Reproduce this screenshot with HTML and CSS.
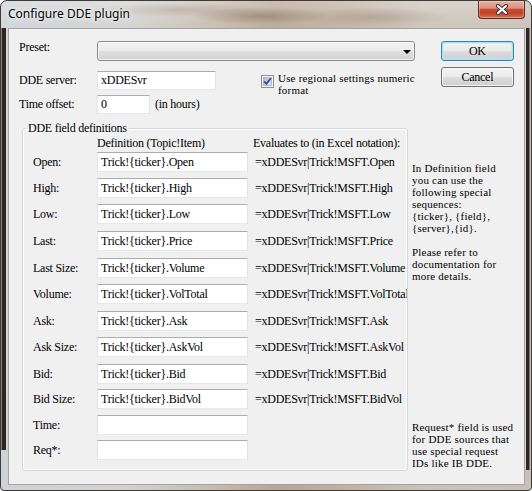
FILE: index.html
```html
<!DOCTYPE html>
<html>
<head>
<meta charset="utf-8">
<title>Configure DDE plugin</title>
<link rel="stylesheet" href="styles.css">
</head>
<body>
<div class="window">
  <div class="titlebar">
    <span class="title">Configure DDE plugin</span>
    <div class="close-btn">
      <svg width="12" height="11" viewBox="0 0 12 11">
        <path d="M2 2 L10 9 M10 2 L2 9" stroke="#3a3a3a" stroke-width="4.2" stroke-linecap="round" fill="none"/>
        <path d="M2 2 L10 9 M10 2 L2 9" stroke="#ffffff" stroke-width="2.2" stroke-linecap="round" fill="none"/>
      </svg>
    </div>
  </div>
  <div class="frame">
    <div class="client">
      <div class="top">
        <div class="form">
          <div class="row row-preset">
            <span class="lbl lbl-preset">Preset:</span>
            <div class="combo"><span class="combo-arrow"></span></div>
          </div>
          <div class="row row-server">
            <span class="lbl lbl-server">DDE server:</span>
            <div class="edit edit-server">xDDESvr</div>
            <div class="check">
              <svg class="checkbox" width="13" height="13" viewBox="0 0 13 13">
                <defs>
                  <linearGradient id="cbg" x1="0" y1="0" x2="1" y2="1">
                    <stop offset="0" stop-color="#aeb7c6"/>
                    <stop offset="1" stop-color="#eef1f5"/>
                  </linearGradient>
                </defs>
                <rect x="0.5" y="0.5" width="12" height="12" fill="#f6f6f6" stroke="#8e8f8f"/>
                <rect x="2.5" y="2.5" width="8" height="8" fill="url(#cbg)" stroke="#b4bccb"/>
                <path d="M3.2 6.4 L5.4 8.8 L9.8 3.2" stroke="#2b4aa0" stroke-width="1.8" fill="none"/>
              </svg>
              <span class="check-text">Use regional settings numeric<br>format</span>
            </div>
          </div>
          <div class="row row-offset">
            <span class="lbl lbl-offset">Time offset:</span>
            <div class="edit edit-offset">0</div>
            <span class="unit">(in hours)</span>
          </div>
        </div>
        <div class="buttons">
          <div class="btn btn-default">OK</div>
          <div class="btn">Cancel</div>
        </div>
      </div>
      <div class="bottom">
        <fieldset class="group">
          <legend class="group-title">DDE field definitions</legend>
          <div class="fields">
            <span></span>
            <span class="col-head">Definition (Topic!Item)</span>
            <span class="col-head eval-head">Evaluates to (in Excel notation):</span>

            <span class="flbl">Open:</span>
            <div class="edit fedit">Trick!{ticker}.Open</div>
            <span class="eval">=xDDESvr|Trick!MSFT.Open</span>

            <span class="flbl">High:</span>
            <div class="edit fedit">Trick!{ticker}.High</div>
            <span class="eval">=xDDESvr|Trick!MSFT.High</span>

            <span class="flbl">Low:</span>
            <div class="edit fedit">Trick!{ticker}.Low</div>
            <span class="eval">=xDDESvr|Trick!MSFT.Low</span>

            <span class="flbl">Last:</span>
            <div class="edit fedit">Trick!{ticker}.Price</div>
            <span class="eval">=xDDESvr|Trick!MSFT.Price</span>

            <span class="flbl">Last Size:</span>
            <div class="edit fedit">Trick!{ticker}.Volume</div>
            <span class="eval">=xDDESvr|Trick!MSFT.Volume</span>

            <span class="flbl">Volume:</span>
            <div class="edit fedit">Trick!{ticker}.VolTotal</div>
            <span class="eval">=xDDESvr|Trick!MSFT.VolTotal</span>

            <span class="flbl">Ask:</span>
            <div class="edit fedit">Trick!{ticker}.Ask</div>
            <span class="eval">=xDDESvr|Trick!MSFT.Ask</span>

            <span class="flbl">Ask Size:</span>
            <div class="edit fedit">Trick!{ticker}.AskVol</div>
            <span class="eval">=xDDESvr|Trick!MSFT.AskVol</span>

            <span class="flbl">Bid:</span>
            <div class="edit fedit">Trick!{ticker}.Bid</div>
            <span class="eval">=xDDESvr|Trick!MSFT.Bid</span>

            <span class="flbl">Bid Size:</span>
            <div class="edit fedit">Trick!{ticker}.BidVol</div>
            <span class="eval">=xDDESvr|Trick!MSFT.BidVol</span>

            <span class="flbl">Time:</span>
            <div class="edit fedit"></div>
            <span class="eval"></span>

            <span class="flbl">Req*:</span>
            <div class="edit fedit"></div>
            <span class="eval"></span>
          </div>
        </fieldset>
        <div class="help">
          <p class="help-p help-top">In Definition field<br>you can use the<br>following special<br>sequences:<br>{ticker}, {field},<br>{server},{id}.<br><br>Please refer to<br>documentation for<br>more details.</p>
          <p class="help-p help-bottom">Request* field is used<br>for DDE sources that<br>use special request<br>IDs like IB DDE.</p>
        </div>
      </div>
    </div>
  </div>
</div>
</body>
</html>
```

FILE: styles.css
```css
* {
  box-sizing: border-box;
}

html, body {
  margin: 0;
  padding: 0;
}

body {
  width: 532px;
  height: 491px;
  overflow: hidden;
  background: #ffffff;
  font-family: "Liberation Serif", "Times New Roman", serif;
  font-size: 12px;
  letter-spacing: -0.25px;
  color: #000000;
}

/* ---------- window frame ---------- */
.window {
  width: 532px;
  height: 491px;
  display: flex;
  flex-direction: column;
  border: 1px solid #3e3a36;
  border-radius: 7px 7px 4px 4px;
  overflow: hidden;
  background:
    linear-gradient(180deg, rgba(255, 255, 255, 0.28) 0px, rgba(255, 255, 255, 0.05) 28px, rgba(255, 255, 255, 0) 100%),
    linear-gradient(90deg, #cfd3d7 0%, #d2d2d0 24%, #c6bbae 40%, #b7a694 52%, #bfb1a2 64%, #cbc3b9 80%, #c8c0b6 100%);
}

.titlebar {
  height: 27px;
  flex: none;
  display: flex;
  align-items: flex-start;
  background:
    radial-gradient(ellipse 70px 9px at 260px 15px, rgba(120, 95, 70, 0.45), rgba(120, 95, 70, 0) 100%),
    radial-gradient(ellipse 90px 7px at 180px 9px, rgba(150, 130, 110, 0.3), rgba(150, 130, 110, 0) 100%),
    radial-gradient(ellipse 80px 10px at 370px 16px, rgba(140, 115, 95, 0.35), rgba(140, 115, 95, 0) 100%);
}

.title {
  font-family: "Noto Sans", "Segoe UI", sans-serif;
  font-size: 12px;
  letter-spacing: 0;
  line-height: 25px;
  padding-left: 7px;
  color: #000000;
  text-shadow: 0 0 5px rgba(255, 255, 255, 0.9), 0 0 2px rgba(255, 255, 255, 0.8);
}

.close-btn {
  margin-left: auto;
  margin-right: 6px;
  width: 47px;
  height: 18px;
  border: 1px solid #5e2b22;
  border-top: 0;
  border-radius: 0 0 4px 4px;
  background: linear-gradient(180deg, #e8b2a3 0%, #dc917d 42%, #c64b31 50%, #c2432a 72%, #d8744e 100%);
  box-shadow: inset 0 0 0 1px rgba(255, 230, 220, 0.35);
  display: flex;
  align-items: center;
  justify-content: center;
}

.frame {
  flex: 1;
  display: flex;
  padding: 0 7px 5px 7px;
  background:
    linear-gradient(90deg, rgba(0, 0, 0, 0) 0px, #2c2723 1px, #2c2723 5px, #d9d6d2 5px, #d9d6d2 6px, rgba(0, 0, 0, 0) 6px) left top / 7px calc(100% - 40px) no-repeat,
    linear-gradient(270deg, rgba(0, 0, 0, 0) 0px, rgba(0, 0, 0, 0) 1px, #2c2723 2px, #2c2723 5px, #d6d2cc 5px, #d6d2cc 6px, rgba(0, 0, 0, 0) 6px) right top / 7px calc(100% - 20px) no-repeat;
}

.client {
  flex: 1;
  display: flex;
  flex-direction: column;
  background: #f0f0f0;
  border: 1px solid #a3a3a3;
}

/* ---------- top form ---------- */
.top {
  display: flex;
  padding: 12px 10px 0 10px;
}

.form {
  flex: 1;
  display: flex;
  flex-direction: column;
}

.row {
  display: flex;
  align-items: flex-start;
}

.lbl {
  width: 78px;
  flex: none;
  line-height: 14px;
  white-space: nowrap;
}

.row-preset {
  height: 20px;
}

.lbl-preset {
  margin-top: -1px;
}

.row-server {
  height: 19px;
  margin-top: 10px;
}

.lbl-server,
.lbl-offset {
  margin-top: 2px;
}

.row-offset {
  height: 19px;
  margin-top: 5px;
}

.combo {
  flex: 1;
  height: 20px;
  border: 1px solid #8b8b8b;
  border-radius: 3px;
  background: linear-gradient(180deg, #f4f4f4 0%, #ececec 48%, #dfdfdf 52%, #d2d2d2 100%);
  box-shadow: inset 0 0 0 1px rgba(255, 255, 255, 0.7);
  display: flex;
  align-items: center;
  justify-content: flex-end;
  padding-right: 3px;
}

.combo-arrow {
  width: 0;
  height: 0;
  border-left: 4px solid transparent;
  border-right: 4px solid transparent;
  border-top: 4px solid #000000;
  margin-top: 1px;
}

.edit {
  background: #ffffff;
  border: 1px solid;
  border-color: #abadb3 #e2e3ea #e3e9ef #e2e3ea;
  padding-left: 3px;
  white-space: nowrap;
  overflow: hidden;
}

.edit-server {
  width: 119px;
  height: 19px;
  line-height: 17px;
}

.edit-offset {
  width: 53px;
  height: 19px;
  line-height: 17px;
}

.check {
  display: flex;
  align-items: flex-start;
  margin-left: 45px;
}

.checkbox {
  display: block;
  flex: none;
  margin-top: 4px;
}

.check-text {
  margin-left: 4px;
  margin-top: 1px;
  font-size: 11px;
  letter-spacing: 0.2px;
  line-height: 12px;
  white-space: nowrap;
}

.unit {
  margin-left: 5px;
  margin-top: 2px;
  line-height: 14px;
}

.buttons {
  width: 73px;
  flex: none;
  margin-left: 26px;
  display: flex;
  flex-direction: column;
  gap: 6px;
}

.btn {
  height: 20px;
  border: 1px solid #707070;
  border-radius: 3px;
  background: linear-gradient(180deg, #f2f2f2 0%, #ebebeb 48%, #dddddd 52%, #cfcfcf 100%);
  box-shadow: inset 0 0 0 1px rgba(255, 255, 255, 0.75);
  display: flex;
  align-items: center;
  justify-content: center;
  line-height: 14px;
}

.btn-default {
  border-color: #3c7fb1;
  box-shadow: inset 0 0 0 1px #a6e1f6, inset 0 0 0 2px rgba(190, 235, 250, 0.5);
}

/* ---------- group box ---------- */
.bottom {
  display: flex;
  margin-top: 7px;
  padding-left: 13px;
}

.group {
  width: 386px;
  flex: none;
  margin: 0;
  padding: 0;
  min-width: 0;
  border: 1px solid #d0d8de;
  border-radius: 3px;
  box-shadow: inset 0 0 0 1px #ffffff;
}

.group-title {
  margin-left: 3px;
  padding: 0 2px;
  line-height: 14px;
}

.fields {
  display: grid;
  grid-template-columns: 64px 151px 159px;
  grid-template-rows: 17px 26px 26px 27px 27px 26px 27px 26px 27px 25px 26px 25px 20px;
  padding: 0 0 10px 10px;
}

.col-head {
  margin-top: 1px;
  line-height: 14px;
  white-space: nowrap;
}

.eval-head {
  padding-left: 5px;
  overflow: hidden;
}

.flbl {
  height: 20px;
  line-height: 20px;
  white-space: nowrap;
}

.fedit {
  height: 20px;
  line-height: 18px;
}

.eval {
  height: 20px;
  line-height: 20px;
  padding-left: 7px;
  white-space: nowrap;
  overflow: hidden;
}

/* ---------- help text ---------- */
.help {
  flex: 1;
  margin-left: 4px;
  display: flex;
  flex-direction: column;
  padding-bottom: 2px;
}

.help-p {
  margin: 0;
  font-size: 11px;
  letter-spacing: 0.2px;
  line-height: 12px;
  white-space: nowrap;
}

.help-top {
  margin-top: 41px;
}

.help-bottom {
  margin-top: auto;
}
```
